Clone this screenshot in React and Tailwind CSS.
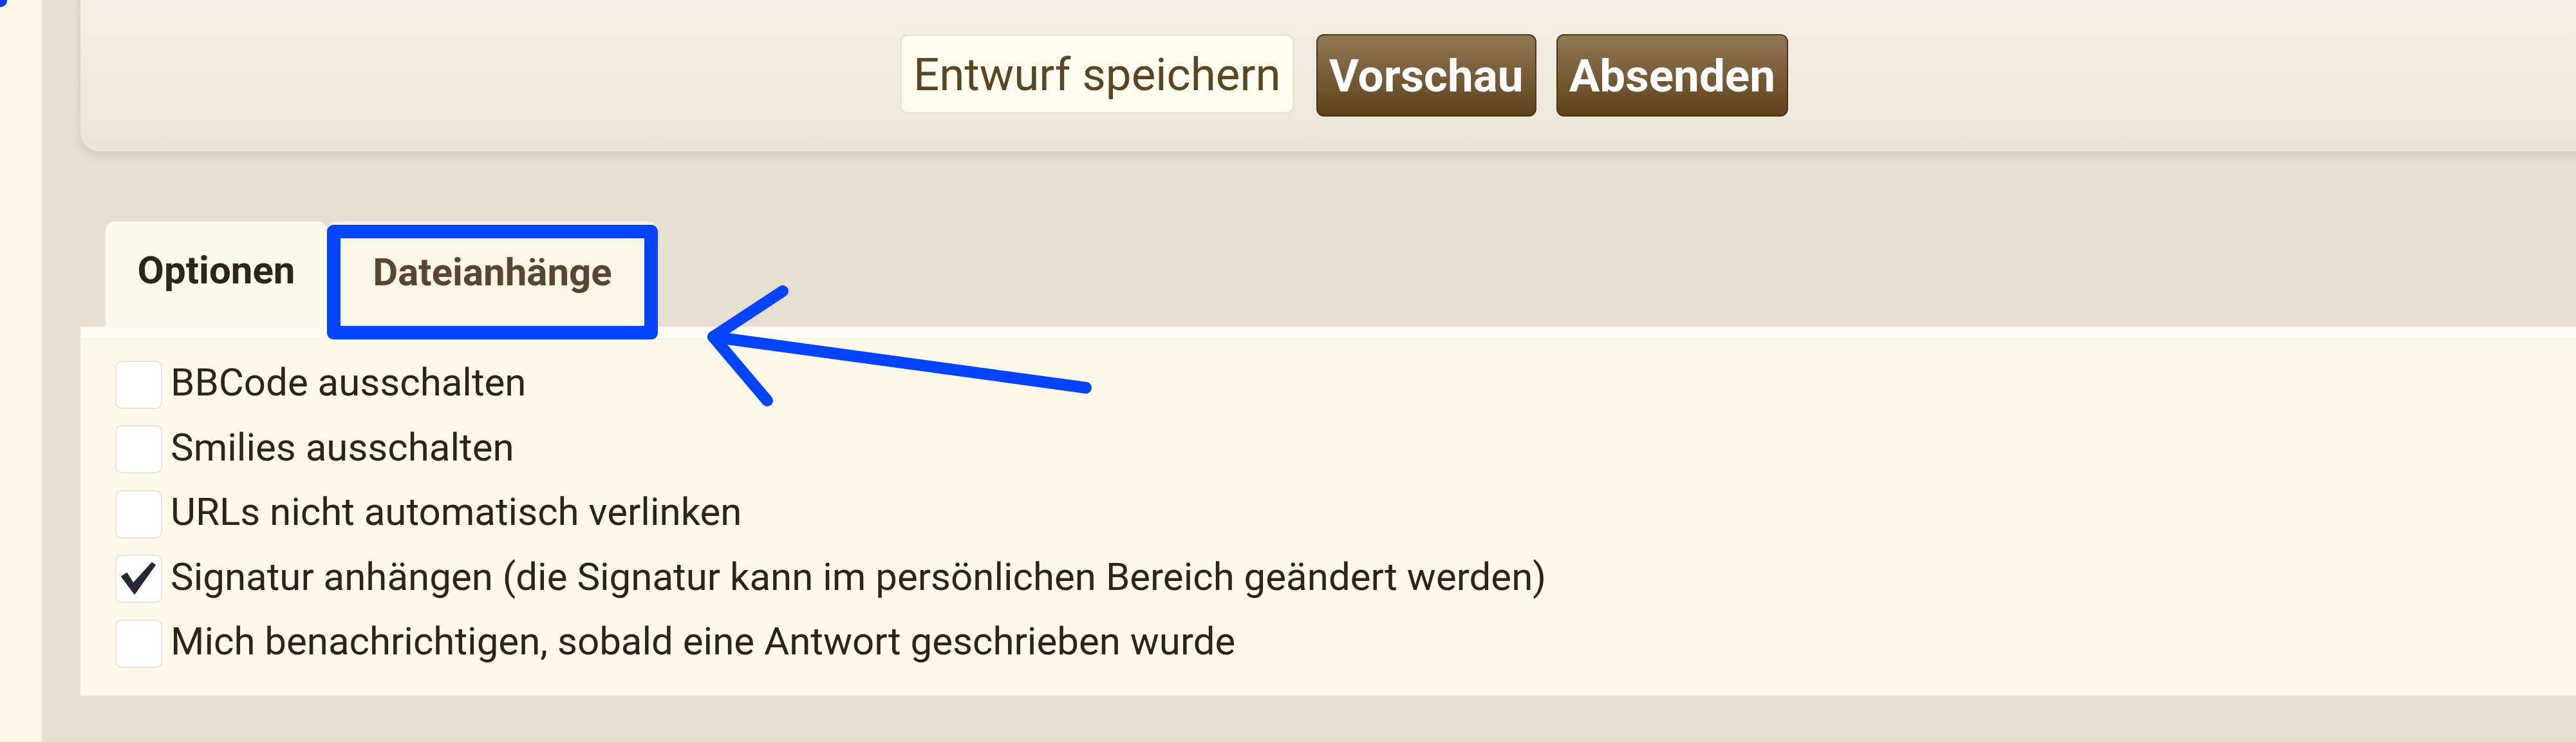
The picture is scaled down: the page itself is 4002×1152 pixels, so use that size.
import React from 'react';

const options = [
    { label: 'BBCode ausschalten', checked: false },
    { label: 'Smilies ausschalten', checked: false },
    { label: 'URLs nicht automatisch verlinken', checked: false },
    { label: 'Signatur anhängen (die Signatur kann im persönlichen Bereich geändert werden)', checked: true },
    { label: 'Mich benachrichtigen, sobald eine Antwort geschrieben wurde', checked: false },
];

const Checkbox = ({ checked }) => (
    <span className="relative w-[73px] h-[75px] shrink-0 rounded-[10px] bg-white border-2 border-[#ebe5d6]">
        {checked && (
            <svg className="absolute -left-[2px] -top-[2px]" width="73" height="75" viewBox="0 0 73 75">
                <path d="M10 34 L18 29 L28 45 L57 13 L62 16 L30 61 Z" fill="#262a38" strokeLinejoin="round" stroke="#262a38" strokeWidth="2" />
            </svg>
        )}
    </span>
);

const App = () => {
    return (
        <div className="relative w-[4002px] h-[1152px] overflow-hidden bg-[#e6dfd2] flex font-['Roboto',sans-serif]">
            {/* left strip */}
            <div className="w-[65px] shrink-0 bg-[#fcf8ea]" />

            <div className="flex flex-col pl-[60px]">
                {/* submit bar */}
                <div className="-mt-[30px] h-[265px] w-[3936px] rounded-[30px] bg-gradient-to-b from-[#f5f1e6] to-[#ece6da] shadow-[0_6px_14px_rgba(160,140,110,0.25)] flex justify-center items-start pt-[83px] pr-[10px] gap-[34px]">
                    <button className="h-[124px] px-[18px] rounded-[12px] bg-[#fffcf0] border-[3px] border-[#ebe3cf] text-[71px] text-[#5a4622] leading-none">
                        Entwurf speichern
                    </button>
                    <div className="flex gap-[31px]">
                        <button className="h-[128px] px-[18px] rounded-[12px] bg-gradient-to-b from-[#917854] to-[#5e4219] border-2 border-[#4e3714] text-[71px] font-bold text-white leading-none">
                            Vorschau
                        </button>
                        <button className="h-[128px] px-[18px] rounded-[12px] bg-gradient-to-b from-[#917854] to-[#5e4219] border-2 border-[#4e3714] text-[71px] font-bold text-white leading-none">
                            Absenden
                        </button>
                    </div>
                </div>

                {/* tabs */}
                <div className="mt-[109px] flex items-end pl-[39px]">
                    <div className="w-[344px] h-[163px] rounded-t-[14px] bg-[#fcf9ed] pt-[40px] text-center text-[60px] leading-[72px] font-bold text-[#2d2517]">
                        Optionen
                    </div>
                    <div className="w-[514px] h-[163px] rounded-t-[14px] bg-[#f9f5e7] pt-[43px] text-center text-[60px] leading-[72px] font-bold text-[#5a4630]">
                        Dateianhänge
                    </div>
                </div>

                {/* options panel */}
                <div className="w-[3936px] h-[573px] bg-[#fcf8ea] border-t-[17px] border-[#fffdf3] pt-[23px] pl-[54px] flex flex-col">
                    {options.map((opt) => (
                        <label key={opt.label} className="h-[100.5px] flex items-center gap-[13px] text-[60px] text-[#2b2419]">
                            <Checkbox checked={opt.checked} />
                            <span className="-mt-[6px]">{opt.label}</span>
                        </label>
                    ))}
                </div>
            </div>

            {/* annotations */}
            <div className="absolute -left-[9px] -top-[9px] w-[20px] h-[20px] rounded-full bg-[#0a3cf5]" />
            <div className="absolute left-[508px] top-[349px] w-[514px] h-[178px] rounded-[10px] border-[21px] border-[#0044ff]" />
            <svg className="absolute left-0 top-0" width="4002" height="1152">
                <g fill="none" stroke="#0044ff" strokeWidth="18" strokeLinecap="round" strokeLinejoin="round">
                    <path d="M1687 602 L1108 523" />
                    <path d="M1216 452 L1108 523 L1192 622" />
                </g>
            </svg>
        </div>
    );
};

export default App;
